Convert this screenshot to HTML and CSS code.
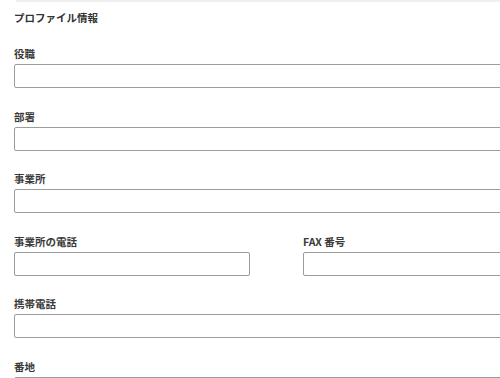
FILE: index.html
```html
<!DOCTYPE html>
<html lang="ja">
<head>
    <meta charset="UTF-8">
    <meta name="viewport" content="width=device-width, initial-scale=1.0">
    <title>プロファイル情報</title>
    <link rel="stylesheet" href="styles.css">
</head>
<body>
    <div class="top-rule"></div>
    <div class="section">
        <h3 class="section-title">プロファイル情報</h3>
        <form class="profile-form">
            <div class="field">
                <label for="title">役職</label>
                <input type="text" id="title">
            </div>
            <div class="field">
                <label for="department">部署</label>
                <input type="text" id="department">
            </div>
            <div class="field">
                <label for="office">事業所</label>
                <input type="text" id="office">
            </div>
            <div class="field-row">
                <div class="field">
                    <label for="office-phone">事業所の電話</label>
                    <input type="text" id="office-phone">
                </div>
                <div class="field">
                    <label for="fax">FAX 番号</label>
                    <input type="text" id="fax">
                </div>
            </div>
            <div class="field">
                <label for="mobile">携帯電話</label>
                <input type="text" id="mobile">
            </div>
            <div class="field">
                <label for="street">番地</label>
                <input type="text" id="street">
            </div>
        </form>
    </div>
</body>
</html>
```
FILE: styles.css
```css
html, body {
    margin: 0;
    overflow: hidden;
}
body {
    font-family: "Noto Sans CJK JP", "Noto Sans", sans-serif;
    color: #333;
    background-color: #fff;
}
.top-rule {
    height: 2px;
    margin-left: 16px;
    background-color: #efefef;
}
.section {
    padding: 9px 0 0 14px;
    width: 525px;
}
.section-title {
    margin: 0 0 22px;
    font-size: 10.5px;
    line-height: 14px;
    font-weight: bold;
}
.profile-form {
    display: flex;
    flex-direction: column;
    gap: 21.6px;
}
.field {
    display: flex;
    flex-direction: column;
    gap: 3px;
}
.field label {
    font-size: 10.5px;
    line-height: 14px;
    font-weight: bold;
    color: #3a3a3a;
}
.field input {
    box-sizing: border-box;
    width: 100%;
    height: 24px;
    margin: 0;
    padding: 0 6px;
    border: 1px solid #9c9c9c;
    border-radius: 2px;
    background: #fff;
}
.field-row {
    display: grid;
    grid-template-columns: 236px 1fr;
    column-gap: 53px;
}
```
